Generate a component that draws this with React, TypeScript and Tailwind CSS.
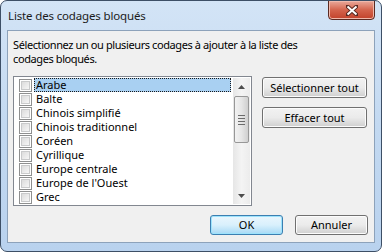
import React from 'react';

const items = [
  'Arabe',
  'Balte',
  'Chinois simplifié',
  'Chinois traditionnel',
  'Coréen',
  'Cyrillique',
  'Europe centrale',
  "Europe de l'Ouest",
  'Grec',
];

function Checkbox() {
  return (
    <span className="flex h-[13px] w-[13px] flex-shrink-0 items-center justify-center border border-[#8e8f8f] bg-white">
      <span className="h-[9px] w-[9px] border border-[#c9cacb] bg-gradient-to-br from-[#dcdcdc] to-[#f6f6f6]" />
    </span>
  );
}

function Row({ label, selected }: { label: string; selected?: boolean }) {
  return (
    <div className="flex h-[14px] items-center">
      <span className="flex w-[18px] justify-center pl-[2px]">
        <Checkbox />
      </span>
      <span
        className={
          selected
            ? 'ml-[1px] mr-[2px] flex h-[14px] flex-1 items-center border border-dotted border-[#1a1a1a] bg-[#a9d0f2] pl-[1px] leading-[12px]'
            : 'ml-[1px] flex h-[14px] flex-1 items-center border border-transparent pl-[1px] leading-[12px]'
        }
      >
        {label}
      </span>
    </div>
  );
}

function Scrollbar() {
  return (
    <div className="flex w-[17px] flex-col items-center bg-gradient-to-r from-[#e6e6e6] via-[#f4f4f4] to-[#ececec]">
      {/* up arrow */}
      <div className="flex h-[18px] w-full items-center justify-center">
        <svg width="7" height="4" viewBox="0 0 7 4">
          <path d="M0 4 L3.5 0 L7 4 Z" fill="#4d4d4d" />
        </svg>
      </div>
      {/* thumb */}
      <div className="flex h-[47px] w-[15px] flex-col items-center justify-center gap-[2px] rounded-[2px] border border-[#979797] bg-gradient-to-r from-[#f2f2f2] via-[#e6e6e6] to-[#cfcfcf]">
        <span className="h-px w-[7px] bg-[#6b6b6b]" />
        <span className="h-px w-[7px] bg-[#6b6b6b]" />
        <span className="h-px w-[7px] bg-[#6b6b6b]" />
        <span className="h-px w-[7px] bg-[#6b6b6b]" />
      </div>
      <div className="flex-1" />
      {/* down arrow */}
      <div className="flex h-[17px] w-full items-center justify-center">
        <svg width="7" height="4" viewBox="0 0 7 4">
          <path d="M0 0 L7 0 L3.5 4 Z" fill="#4d4d4d" />
        </svg>
      </div>
    </div>
  );
}

function Button({ children, className, focused }: { children: React.ReactNode; className: string; focused?: boolean }) {
  return (
    <div
      className={
        (focused
          ? 'border-[#3c7fb1] bg-gradient-to-b from-[#eaf6fd] via-[#d9f0fc] to-[#a7d9f5] shadow-[inset_0_0_0_1px_#9de3fc] '
          : 'border-[#707070] bg-gradient-to-b from-[#f2f2f2] via-[#ebebeb] to-[#cfcfcf] shadow-[inset_0_0_0_1px_#fcfcfc] ') +
        'flex items-center justify-center rounded-[3px] border leading-[14px] text-[#000] ' +
        className
      }
    >
      {children}
    </div>
  );
}

export default function App() {
  return (
    <div
      className="flex h-[252px] w-[382px] flex-col overflow-hidden rounded-[7px] border border-[#3d4f66] bg-gradient-to-b from-[#d3e4f6] via-[#c3d9f1] to-[#b9d2ee] text-[11px] text-black"
      style={{ fontFamily: '"Noto Sans", "Liberation Sans", sans-serif' }}
    >
      {/* Title bar */}
      <div className="flex h-[29px] items-start justify-between">
        <span className="pl-[7px] pt-[7px] text-[11.5px] leading-[16px] tracking-[-0.15px] text-[#1b1b1b]">
          Liste des codages bloqués
        </span>
        <div className="mr-[6px] mt-[-1px] flex h-[20px] w-[47px] items-center justify-center rounded-b-[4px] border border-[#5a2a22] bg-gradient-to-b from-[#e9a99b] via-[#d4634c] to-[#c2412a] shadow-[inset_0_0_0_1px_#f0b9ac]">
          <svg width="12" height="11" viewBox="0 0 12 11">
            <path d="M1 1 L11 10 M11 1 L1 10" stroke="#5a2a22" strokeWidth="4" strokeLinecap="square" />
            <path d="M1.5 1.5 L10.5 9.5 M10.5 1.5 L1.5 9.5" stroke="#ffffff" strokeWidth="2" />
          </svg>
        </div>
      </div>

      {/* Client area */}
      <div className="mx-[6px] mb-[8px] flex flex-1 flex-col border border-[#8da2ba] bg-[#f0f0f0] px-[5px] pt-[7px]">
        <p className="leading-[14px] tracking-[-0.4px]">
          Sélectionnez un ou plusieurs codages à ajouter à la liste des
          <br />
          codages bloqués.
        </p>

        <div className="mt-[10px] flex gap-[10px]">
          {/* List */}
          <div className="flex h-[130px] w-[239px] border border-[#828790] bg-white p-px">
            <div className="flex flex-1 flex-col">
              {items.map((it, i) => (
                <Row key={it} label={it} selected={i === 0} />
              ))}
            </div>
            <Scrollbar />
          </div>

          {/* Side buttons */}
          <div className="mt-[1px] flex flex-col gap-[9px]">
            <Button className="h-[21px] w-[105px]">Sélectionner tout</Button>
            <Button className="h-[21px] w-[105px]">Effacer tout</Button>
          </div>
        </div>

        <div className="mt-[9px] flex justify-end gap-[12px] pr-[1px]">
          <Button focused className="h-[20px] w-[73px]">OK</Button>
          <Button className="h-[20px] w-[73px]">Annuler</Button>
        </div>
      </div>
    </div>
  );
}
